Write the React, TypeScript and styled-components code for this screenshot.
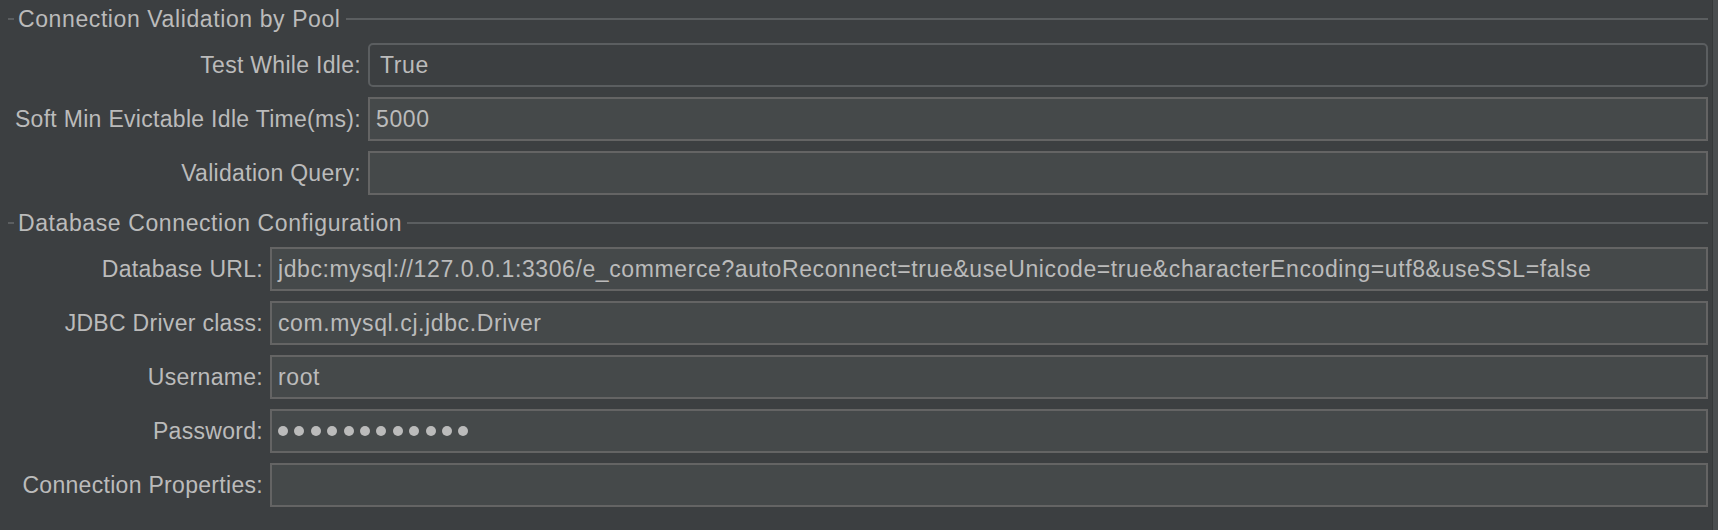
import React from "react";
import styled, { createGlobalStyle } from "styled-components";

const GlobalStyle = createGlobalStyle`
  html, body {
    margin: 0;
    padding: 0;
    background: #3c3f41;
  }
  body {
    font-family: "Liberation Sans", Arial, sans-serif;
    color: #bbbbbb;
  }
`;

const Window = styled.div`
  display: flex;
  width: 1718px;
  height: 530px;
  background: #3c3f41;
  overflow: hidden;
`;

const Content = styled.div`
  flex: 1;
  min-width: 0;
  padding: 0 4px 0 8px;
`;

const EdgeStrip = styled.div`
  width: 5px;
  border-left: 1px solid #353839;
  background: #4a4d4f;
`;

const Section = styled.section`
  & + & {
    margin-top: 9px;
  }
`;

const Legend = styled.div`
  display: flex;
  align-items: center;
  height: 38px;
  font-size: 23px;
  letter-spacing: 0.6px;
  white-space: nowrap;

  &::before {
    content: "";
    width: 6px;
    height: 2px;
    margin-right: 4px;
    background: #5b5e60;
  }
  &::after {
    content: "";
    flex: 1;
    height: 2px;
    margin-left: 5px;
    background: #5b5e60;
  }
`;

const Rows = styled.div<{ $labelWidth: number }>`
  display: grid;
  grid-template-columns: ${(p) => p.$labelWidth}px 1fr;
  column-gap: 7px;
  row-gap: 10px;
  margin-top: 5px;
`;

const Label = styled.label`
  display: flex;
  align-items: center;
  justify-content: flex-end;
  font-size: 23px;
  letter-spacing: 0.3px;
  white-space: nowrap;
`;

const Field = styled.div<{ $combo?: boolean }>`
  display: flex;
  align-items: center;
  height: 44px;
  box-sizing: border-box;
  padding: 0 ${(p) => (p.$combo ? "10px" : "6px")};
  border: 2px solid ${(p) => (p.$combo ? "#5b5e60" : "#646464")};
  border-radius: ${(p) => (p.$combo ? "5px" : "0")};
  background: ${(p) => (p.$combo ? "#3c3f41" : "#45494a")};
  font-size: 23px;
  letter-spacing: 0.6px;
  color: #bbbbbb;
  white-space: nowrap;
  overflow: hidden;
`;

const Dots = styled.div`
  display: flex;
  gap: 6.4px;
`;

const Dot = styled.span`
  width: 10px;
  height: 10px;
  border-radius: 50%;
  background: #bbbbbb;
`;

type Row = { label: string; value?: string; combo?: boolean; secret?: number };

const poolRows: Row[] = [
  { label: "Test While Idle:", value: "True", combo: true },
  { label: "Soft Min Evictable Idle Time(ms):", value: "5000" },
  { label: "Validation Query:", value: "" },
];

const dbRows: Row[] = [
  {
    label: "Database URL:",
    value:
      "jdbc:mysql://127.0.0.1:3306/e_commerce?autoReconnect=true&useUnicode=true&characterEncoding=utf8&useSSL=false",
  },
  { label: "JDBC Driver class:", value: "com.mysql.cj.jdbc.Driver" },
  { label: "Username:", value: "root" },
  { label: "Password:", secret: 12 },
  { label: "Connection Properties:", value: "" },
];

const FormSection: React.FC<{ title: string; labelWidth: number; rows: Row[] }> = ({
  title,
  labelWidth,
  rows,
}) => (
  <Section>
    <Legend>{title}</Legend>
    <Rows $labelWidth={labelWidth}>
      {rows.map((row) => (
        <React.Fragment key={row.label}>
          <Label>{row.label}</Label>
          <Field $combo={row.combo}>
            {row.secret ? (
              <Dots>
                {Array.from({ length: row.secret }).map((_, i) => (
                  <Dot key={i} />
                ))}
              </Dots>
            ) : (
              row.value
            )}
          </Field>
        </React.Fragment>
      ))}
    </Rows>
  </Section>
);

const App: React.FC = () => {
  return (
    <>
      <GlobalStyle />
      <Window>
        <Content>
          <FormSection title="Connection Validation by Pool" labelWidth={353} rows={poolRows} />
          <FormSection title="Database Connection Configuration" labelWidth={255} rows={dbRows} />
        </Content>
        <EdgeStrip />
      </Window>
    </>
  );
};

export default App;
